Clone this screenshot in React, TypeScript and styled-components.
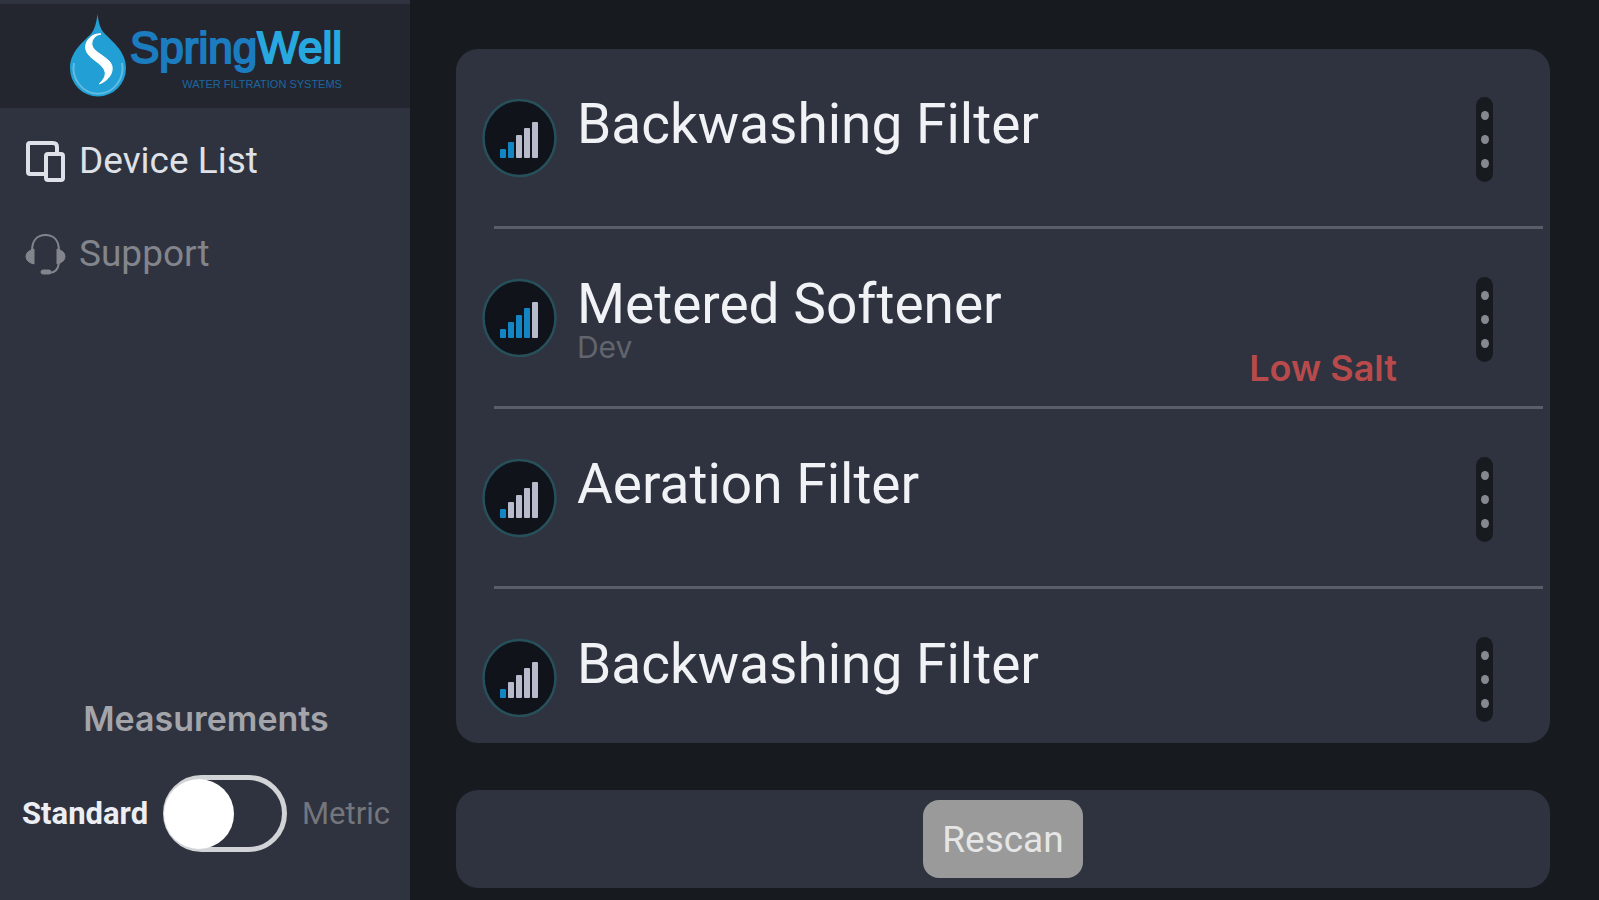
import React, { useState } from "react";
import styled, { createGlobalStyle } from "styled-components";

const color = {
  page: "#171a1f",
  panel: "#2f333f",
  header: "#23262f",
  divider: "#5a5d68",
  text: "#f1f2f5",
  muted: "#83858c",
  faint: "#62656d",
  danger: "#b94a4b",
  blue: "#1385c2",
  bar: "#b7bbcc",
};

const GlobalStyle = createGlobalStyle`
  * { box-sizing: border-box; }
  body {
    margin: 0;
    background: ${color.page};
    color: ${color.text};
    font-family: Roboto, "Liberation Sans", sans-serif;
  }
`;

const Page = styled.div`
  display: flex;
  min-height: 100vh;
`;

const Sidebar = styled.aside`
  display: flex;
  flex-direction: column;
  flex: 0 0 409px;
  padding-top: 4px;
  background: ${color.panel};
`;

const Brand = styled.header`
  display: flex;
  gap: 4px;
  height: 104px;
  padding: 10px 68px 0 70px;
  background: ${color.header};
`;

const BrandText = styled.div`
  display: flex;
  flex-direction: column;
  align-items: flex-end;
  padding-top: 6px;
  font-family: "Liberation Sans", Arial, sans-serif;
`;

const BrandName = styled.div`
  font-size: 44px;
  line-height: 56px;
  color: #1b7cc0;
  -webkit-text-stroke: 2px currentColor;
`;

const BrandAccent = styled.span`
  color: #27a9e0;
`;

const Tagline = styled.div`
  font-size: 11px;
  line-height: 16px;
  white-space: nowrap;
  color: #1c66a0;
`;

const Nav = styled.nav`
  display: flex;
  flex-direction: column;
  gap: 45px;
  padding: 29px 24px;
`;

const NavLink = styled.a<{ $active?: boolean }>`
  display: flex;
  align-items: center;
  gap: 12px;
  font-size: 37px;
  line-height: 48px;
  text-decoration: none;
  color: ${(p) => (p.$active ? "#dfe1e8" : color.muted)};
`;

const Measurements = styled.fieldset`
  display: flex;
  flex-direction: column;
  gap: 36px;
  margin: auto 0 0;
  padding: 0 20px 48px 22px;
  border: 0;
`;

const MeasurementsTitle = styled.div`
  font-family: Inter, sans-serif;
  font-size: 34px;
  line-height: 40px;
  font-weight: 600;
  text-align: center;
  color: #a3a5aa;
`;

const SwitchRow = styled.label`
  display: flex;
  align-items: center;
  justify-content: space-between;
  cursor: pointer;
`;

const Unit = styled.span<{ $on: boolean }>`
  font-size: 31px;
  line-height: 40px;
  font-weight: ${(p) => (p.$on ? 700 : 400)};
  color: ${(p) => (p.$on ? "#eceef3" : "#74767d")};
`;

const Switch = styled.input`
  appearance: none;
  display: flex;
  align-items: center;
  width: 124px;
  height: 77px;
  margin: 0;
  border: 5px solid #d2d3d7;
  border-radius: 39px;
  cursor: pointer;

  &::before {
    content: "";
    width: 70px;
    height: 70px;
    margin: 0 -4px;
    border-radius: 50%;
    background: #fff;
  }

  &:checked {
    justify-content: flex-end;
  }
`;

const Main = styled.main`
  display: flex;
  flex-direction: column;
  flex: 1;
  gap: 47px;
  min-width: 0;
  padding: 49px 49px 12px 46px;
`;

const DeviceList = styled.ul`
  margin: 0;
  padding: 0;
  list-style: none;
  border-radius: 22px;
  background: ${color.panel};
`;

const DeviceItem = styled.li`
  &:not(:last-child)::after {
    content: "";
    display: block;
    height: 3px;
    margin: 0 7px 0 38px;
    background: ${color.divider};
  }
`;

const DeviceRow = styled.div<{ $last: boolean }>`
  display: flex;
  align-items: flex-start;
  height: ${(p) => (p.$last ? 154 : 177)}px;
  padding: 48px 57px 0 26px;
`;

const DeviceText = styled.div`
  flex: 1;
  padding-left: 19px;
`;

const DeviceName = styled.h2`
  margin: 0;
  font-size: 55px;
  line-height: 54px;
  font-weight: 400;
`;

const DeviceNote = styled.p`
  margin: 0;
  font-family: Inter, sans-serif;
  font-size: 30px;
  line-height: 32px;
  color: ${color.faint};
`;

const DeviceStatus = styled.strong`
  align-self: flex-end;
  padding: 0 79px 16px 0;
  font-family: Inter, sans-serif;
  font-size: 36px;
  line-height: 44px;
  font-weight: 600;
  color: ${color.danger};
`;

const MenuButton = styled.button`
  display: flex;
  flex-direction: column;
  align-items: center;
  justify-content: space-between;
  width: 17px;
  height: 85px;
  padding: 14px 0;
  border: 0;
  border-radius: 9px;
  background: ${color.page};
  cursor: pointer;
`;

const Dot = styled.span`
  width: 8px;
  height: 9px;
  border-radius: 50%;
  background: #878990;
`;

const ActionBar = styled.section`
  display: flex;
  justify-content: center;
  padding: 10px;
  border-radius: 22px;
  background: ${color.panel};
`;

const RescanButton = styled.button`
  width: 160px;
  height: 78px;
  padding: 2px 0 0;
  border: 0;
  border-radius: 16px;
  background: #999a99;
  color: #e6e6e6;
  font: 37px/76px Roboto, "Liberation Sans", sans-serif;
  cursor: pointer;
`;

function DropLogo() {
  return (
    <svg width="56" height="83" viewBox="0 0 56 83" aria-hidden="true">
      <path d="M27.500 0C28.500 8 30 15 35 20C43 28 56 38 56 54A28 28.500 0 0 1 0 54C0 38 13 28 21 20C25 15 26.500 8 27.500 0Z" fill="#229fd4" />
      <path d="M4 49A24.500 25.500 0 1 0 52 49" fill="none" stroke="#62bce2" strokeWidth="2" />
      <path d="M31 20C24 19 18 24 16 30C14 38 20 43 27 48C36 55 39 61 29 70C41 66 46 54 39 47C32 40 20 36 22 28C23 24 26 21 31 20Z" fill="#fff" stroke="#fff" strokeWidth="1" />
    </svg>
  );
}

function DevicesIcon() {
  return (
    <svg width="43" height="44" viewBox="0 0 43 44" fill="none" stroke="currentColor" strokeWidth="4" aria-hidden="true">
      <path d="M20 35H6Q4 35 4 33V6Q4 4 6 4H29Q33 4 33 8V13" />
      <rect x="22" y="15" width="17" height="26" rx="2" />
    </svg>
  );
}

function HeadsetIcon() {
  return (
    <svg width="43" height="44" viewBox="0 0 43 44" fill="none" stroke="currentColor" strokeWidth="2" aria-hidden="true">
      <path d="M8 19C8 9 13 3 21.500 3S35 9 35 19M35 31C34 38 30 41 25 41" />
      <path d="M10 17V32Q2 30 2 24.500T10 17ZM33 17V32Q41 30 41 24.500T33 17Z" fill="currentColor" strokeWidth="1" />
      <rect x="17" y="38" width="10" height="4" rx="2" fill="currentColor" strokeWidth="1" />
    </svg>
  );
}

const barHeights = [9, 16, 23, 30, 36];

function SignalIcon({ level }: { level: number }) {
  return (
    <svg width="76" height="81" viewBox="0 0 76 81" role="img" aria-label={`Signal ${level} of 5`}>
      <ellipse cx="37.500" cy="41" rx="36" ry="38" fill="#10131a" stroke="#27505b" strokeWidth="2.500" />
      {barHeights.map((h, i) => (
        <rect key={h} x={18 + i * 8} y={61 - h} width="6" height={h} rx="1" fill={i < level ? color.blue : color.bar} />
      ))}
    </svg>
  );
}

interface Device {
  id: number;
  name: string;
  level: number;
  note?: string;
  status?: string;
}

const devices: Device[] = [
  { id: 1, name: "Backwashing Filter", level: 2 },
  { id: 2, name: "Metered Softener", level: 4, note: "Dev", status: "Low Salt" },
  { id: 3, name: "Aeration Filter", level: 1 },
  { id: 4, name: "Backwashing Filter", level: 1 },
];

export default function App() {
  const [metric, setMetric] = useState(false);

  return (
    <>
      <GlobalStyle />
      <Page>
        <Sidebar>
          <Brand>
            <DropLogo />
            <BrandText>
              <BrandName>
                Spring<BrandAccent>Well</BrandAccent>
              </BrandName>
              <Tagline>WATER FILTRATION SYSTEMS</Tagline>
            </BrandText>
          </Brand>
          <Nav>
            <NavLink href="#devices" $active aria-current="page">
              <DevicesIcon />
              Device List
            </NavLink>
            <NavLink href="#support">
              <HeadsetIcon />
              Support
            </NavLink>
          </Nav>
          <Measurements aria-labelledby="measurements-title">
            <MeasurementsTitle id="measurements-title">Measurements</MeasurementsTitle>
            <SwitchRow>
              <Unit $on={!metric}>Standard</Unit>
              <Switch type="checkbox" role="switch" checked={metric} onChange={(e) => setMetric(e.target.checked)} />
              <Unit $on={metric}>Metric</Unit>
            </SwitchRow>
          </Measurements>
        </Sidebar>
        <Main>
          <DeviceList>
            {devices.map((d, i) => (
              <DeviceItem key={d.id}>
                <DeviceRow $last={i === devices.length - 1}>
                  <SignalIcon level={d.level} />
                  <DeviceText>
                    <DeviceName>{d.name}</DeviceName>
                    {d.note && <DeviceNote>{d.note}</DeviceNote>}
                  </DeviceText>
                  {d.status && <DeviceStatus>{d.status}</DeviceStatus>}
                  <MenuButton type="button" aria-label={`${d.name} options`}>
                    <Dot />
                    <Dot />
                    <Dot />
                  </MenuButton>
                </DeviceRow>
              </DeviceItem>
            ))}
          </DeviceList>
          <ActionBar>
            <RescanButton type="button">Rescan</RescanButton>
          </ActionBar>
        </Main>
      </Page>
    </>
  );
}
